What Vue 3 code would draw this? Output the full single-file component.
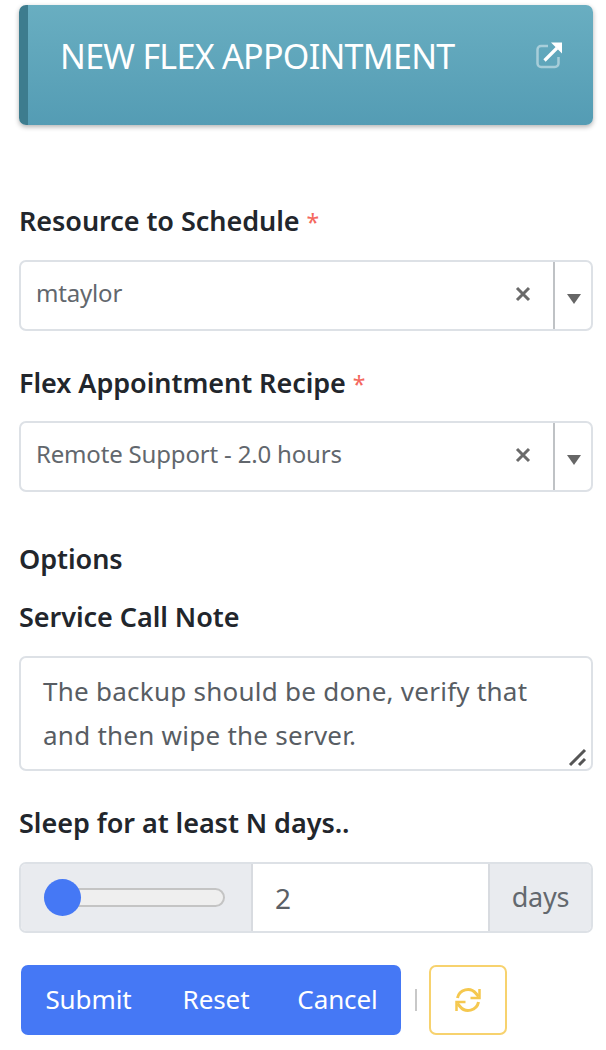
<template>
  <div class="page">
    <div class="banner">
      <span class="banner-title">NEW FLEX APPOINTMENT</span>
      <svg class="banner-icon" width="30" height="30" viewBox="0 0 30 30" fill="none">
        <path d="M14 6H7a3.500 3.500 0 0 0-3.500 3.500v14A3.500 3.500 0 0 0 7 27h14a3.500 3.500 0 0 0 3.500-3.500V17" stroke="#fff" stroke-opacity="0.45" stroke-width="2.500" />
        <path d="M10.500 20.500 23 8" stroke="#fff" stroke-width="3.200" />
        <path d="M17 2.500h11v11z" fill="#fff" />
      </svg>
    </div>

    <form class="form" @submit.prevent>
      <label class="label first">Resource to Schedule <span class="req">*</span></label>
      <div class="select">
        <span class="select-value">mtaylor</span>
        <svg class="clear" width="16" height="16" viewBox="0 0 16 16" stroke="#6a6a6a" stroke-width="3">
          <path d="M2 2l12 12M14 2 2 14" />
        </svg>
        <span class="caret"></span>
      </div>

      <label class="label second">Flex Appointment Recipe <span class="req">*</span></label>
      <div class="select">
        <span class="select-value">Remote Support - 2.0 hours</span>
        <svg class="clear" width="16" height="16" viewBox="0 0 16 16" stroke="#6a6a6a" stroke-width="3">
          <path d="M2 2l12 12M14 2 2 14" />
        </svg>
        <span class="caret"></span>
      </div>

      <div class="label options">Options</div>
      <label class="label note-label">Service Call Note</label>
      <div class="note">
        The backup should be done, verify that and then wipe the server.
        <svg class="grip" width="20" height="20" viewBox="0 0 20 20" fill="none" stroke="#555" stroke-width="3">
          <path d="M2 18 17 3" />
          <path d="M11 18l6-6" />
        </svg>
      </div>

      <label class="label sleep-label">Sleep for at least N days..</label>
      <div class="range-group">
        <div class="range-addon">
          <div class="track">
            <div class="thumb"></div>
          </div>
        </div>
        <div class="range-value">{{ days }}</div>
        <div class="range-unit">days</div>
      </div>

      <div class="actions">
        <div class="btn-group">
          <button class="btn submit" type="button">Submit</button>
          <button class="btn reset" type="button">Reset</button>
          <button class="btn cancel" type="button">Cancel</button>
        </div>
        <span class="divider"></span>
        <button class="refresh" type="button">
          <svg width="28" height="28" viewBox="0 0 28 28" fill="none" stroke="#f5c84f" stroke-width="3">
            <path d="M3.500 12A10.500 10.500 0 0 1 22 7.500l2.500 3" />
            <path d="M25.500 3v9h-9" stroke-width="2.500" />
            <path d="M24.500 16A10.500 10.500 0 0 1 6 20.500l-2.500-3" />
            <path d="M2.500 25v-9h9" stroke-width="2.500" />
          </svg>
        </button>
      </div>
    </form>
  </div>
</template>

<script setup>
import { ref } from 'vue'

const days = ref(2)
</script>

<style>
body {
  background: #fff;
}
</style>

<style scoped>
.page {
  width: 606px;
  height: 1050px;
  box-sizing: border-box;
  padding: 5px 13px 0 19px;
  font-family: "Noto Sans", "Open Sans", sans-serif;
  color: #212529;
  overflow: hidden;
}

.banner {
  height: 120px;
  box-sizing: border-box;
  border-left: 9px solid #3d7c8e;
  border-radius: 7px;
  background: linear-gradient(#69aec1, #549cb4);
  box-shadow: 0 2px 5px rgba(0, 0, 0, 0.3);
  padding: 29px 29px 0 32px;
  display: flex;
  justify-content: space-between;
  align-items: flex-start;
}

.banner-title {
  color: #fff;
  font-size: 34px;
  line-height: 44px;
  letter-spacing: -0.7px;
}

.banner-icon {
  margin-top: 6px;
}

.form {
  display: flex;
  flex-direction: column;
}

.label {
  display: block;
  font-weight: 600;
  font-size: 27px;
  line-height: 34px;
  letter-spacing: -0.05px;
  color: #22262c;
}

.first {
  margin-top: 79px;
  margin-bottom: 22px;
}

.second {
  margin-top: 35px;
  margin-bottom: 21px;
}

.options {
  margin-top: 50px;
}

.note-label {
  margin-top: 24px;
  margin-bottom: 22px;
}

.sleep-label {
  margin-top: 35px;
  margin-bottom: 22px;
}

.req {
  color: #f4685e;
  font-weight: 400;
  font-size: 23px;
  line-height: 0;
}

.select {
  height: 71px;
  box-sizing: border-box;
  border: 2px solid #dde1e6;
  border-radius: 7px;
  display: flex;
  align-items: center;
  padding-left: 15px;
  color: #62676d;
  font-size: 24px;
  letter-spacing: -0.18px;
}

.select-value {
  flex: 1;
  padding-bottom: 6px;
}

.clear {
  margin-right: 22px;
  margin-bottom: 4px;
}

.caret {
  width: 38px;
  box-sizing: border-box;
  align-self: stretch;
  border-left: 2px solid #bfc2c5;
  position: relative;
}

.caret::after {
  content: "";
  position: absolute;
  left: 12px;
  top: 32px;
  border-left: 7px solid transparent;
  border-right: 7px solid transparent;
  border-top: 10px solid #666;
}

.note {
  position: relative;
  height: 115px;
  box-sizing: border-box;
  border: 2px solid #dde1e6;
  border-radius: 7px;
  padding: 11px 22px;
  color: #585d63;
  font-size: 26px;
  line-height: 44px;
  letter-spacing: 0.25px;
}

.grip {
  position: absolute;
  right: 3px;
  bottom: 2px;
}

.range-group {
  height: 71px;
  box-sizing: border-box;
  border: 2px solid #dde1e6;
  border-radius: 7px;
  display: flex;
  overflow: hidden;
}

.range-addon {
  width: 232px;
  background: #e9ebef;
  border-right: 2px solid #d8dbe0;
  box-sizing: border-box;
  display: flex;
  align-items: center;
  padding-left: 23px;
}

.track {
  width: 181px;
  height: 19px;
  box-sizing: border-box;
  background: #efefef;
  border: 2px solid #c4c4c4;
  border-radius: 10px;
  position: relative;
}

.thumb {
  position: absolute;
  left: -2px;
  top: -11px;
  width: 37px;
  height: 37px;
  border-radius: 50%;
  background: #4578f5;
}

.range-value {
  flex: 1;
  display: flex;
  align-items: center;
  padding-left: 22px;
  color: #5b6066;
  font-size: 28px;
}

.range-unit {
  width: 103px;
  box-sizing: border-box;
  background: #e9ebef;
  border-left: 2px solid #d8dbe0;
  display: flex;
  align-items: center;
  justify-content: center;
  color: #63686e;
  font-size: 27px;
  letter-spacing: -0.2px;
  padding-bottom: 2px;
}

.actions {
  margin-top: 32px;
  padding-left: 2px;
  display: flex;
  align-items: center;
}

.btn-group {
  display: flex;
  width: 380px;
  height: 70px;
  background: #4578f5;
  border-radius: 7px;
  overflow: hidden;
}

.btn {
  border: 0;
  padding: 0 0 2px;
  background: transparent;
  color: #fff;
  font-family: inherit;
  font-size: 26px;
  letter-spacing: -0.1px;
}

.submit {
  width: 135px;
}

.reset {
  width: 118px;
  padding-left: 2px;
}

.cancel {
  width: 127px;
}

.divider {
  width: 2px;
  height: 22px;
  margin: 0 12px 0 14px;
  background: #c8c8c8;
}

.refresh {
  width: 78px;
  height: 70px;
  box-sizing: border-box;
  background: #fff;
  border: 2px solid #f7d26e;
  border-radius: 7px;
  padding: 0;
  display: flex;
  align-items: center;
  justify-content: center;
}
</style>
